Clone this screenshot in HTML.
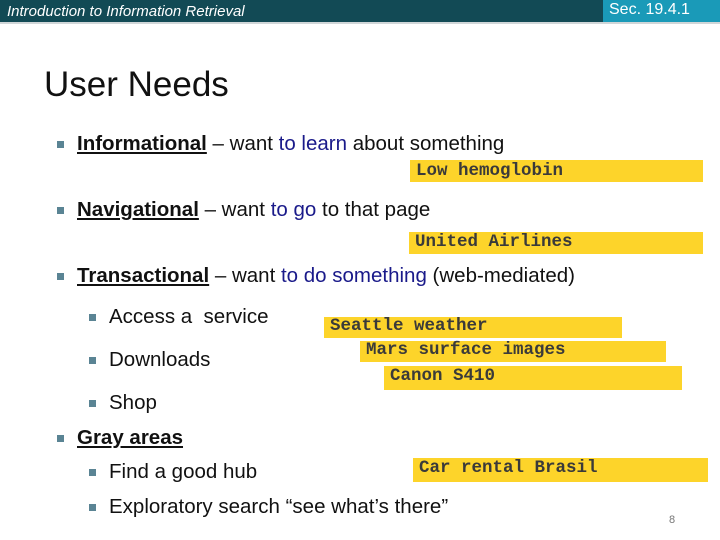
<!DOCTYPE html>
<html><head><meta charset="utf-8"><style>
body{margin:0;width:720px;height:540px;position:relative;background:#fff;font-family:"Liberation Sans",sans-serif;overflow:hidden}
.hd{position:absolute;left:0;top:0;width:603px;height:22px;background:#124a55}
.hd2{position:absolute;left:603px;top:0;width:117px;height:22px;background:#1a9ab8}
.ln{position:absolute;left:0;top:22px;width:720px;height:2px;background:#d0d6d8}
.t{position:absolute;white-space:nowrap}
.b{position:absolute;width:7px;height:7px;background:#5a8494}
.y{position:absolute;background:#fdd42a;font-family:"Liberation Mono",monospace;font-weight:bold;font-size:17.5px;color:#3a3a3a;padding-left:6px;box-sizing:border-box}
.x{font-size:20.5px;color:#111}
.bl{color:#1a1a8a}
u{font-weight:bold}
</style></head><body>
<div class="hd"></div><div class="hd2"></div><div class="ln"></div>
<div class="t" style="left:7px;top:3px;font-size:15px;font-style:italic;color:#fff">Introduction to Information Retrieval</div>
<div class="t" style="left:609px;top:1px;font-size:16px;color:#fff">Sec. 19.4.1</div>
<div class="t" style="left:44px;top:65px;font-size:35px;color:#111">User Needs</div>

<div class="b" style="left:57px;top:141px"></div>
<div class="t x" style="left:77px;top:132px"><u>Informational</u> – want <span class="bl">to learn</span> about something</div>
<div class="y" style="left:410px;top:160px;width:293px;height:22px;line-height:22px">Low hemoglobin</div>

<div class="b" style="left:57px;top:207px"></div>
<div class="t x" style="left:77px;top:198px"><u>Navigational</u> – want <span class="bl">to go</span> to that page</div>
<div class="y" style="left:409px;top:232px;width:294px;height:22px;line-height:21px">United Airlines</div>

<div class="b" style="left:57px;top:273px"></div>
<div class="t x" style="left:77px;top:264px"><u>Transactional</u> – want <span class="bl">to do something</span> (web-mediated)</div>

<div class="b" style="left:89px;top:314px"></div>
<div class="t x" style="left:109px;top:305px">Access a&nbsp; service</div>
<div class="b" style="left:89px;top:357px"></div>
<div class="t x" style="left:109px;top:348px">Downloads</div>
<div class="b" style="left:89px;top:400px"></div>
<div class="t x" style="left:109px;top:391px">Shop</div>

<div class="y" style="left:324px;top:317px;width:298px;height:21px;line-height:19px">Seattle weather</div>
<div class="y" style="left:360px;top:341px;width:306px;height:21px;line-height:19px">Mars surface images</div>
<div class="y" style="left:384px;top:366px;width:298px;height:24px;line-height:21px">Canon S410</div>

<div class="b" style="left:57px;top:435px"></div>
<div class="t x" style="left:77px;top:426px"><u>Gray areas</u></div>
<div class="b" style="left:89px;top:469px"></div>
<div class="t x" style="left:109px;top:460px">Find a good hub</div>
<div class="b" style="left:89px;top:504px"></div>
<div class="t x" style="left:109px;top:495px">Exploratory search “see what’s there”</div>
<div class="y" style="left:413px;top:458px;width:295px;height:24px;line-height:21px">Car rental Brasil</div>
<div class="t" style="left:669px;top:514px;font-size:11px;color:#777">8</div>
</body></html>
